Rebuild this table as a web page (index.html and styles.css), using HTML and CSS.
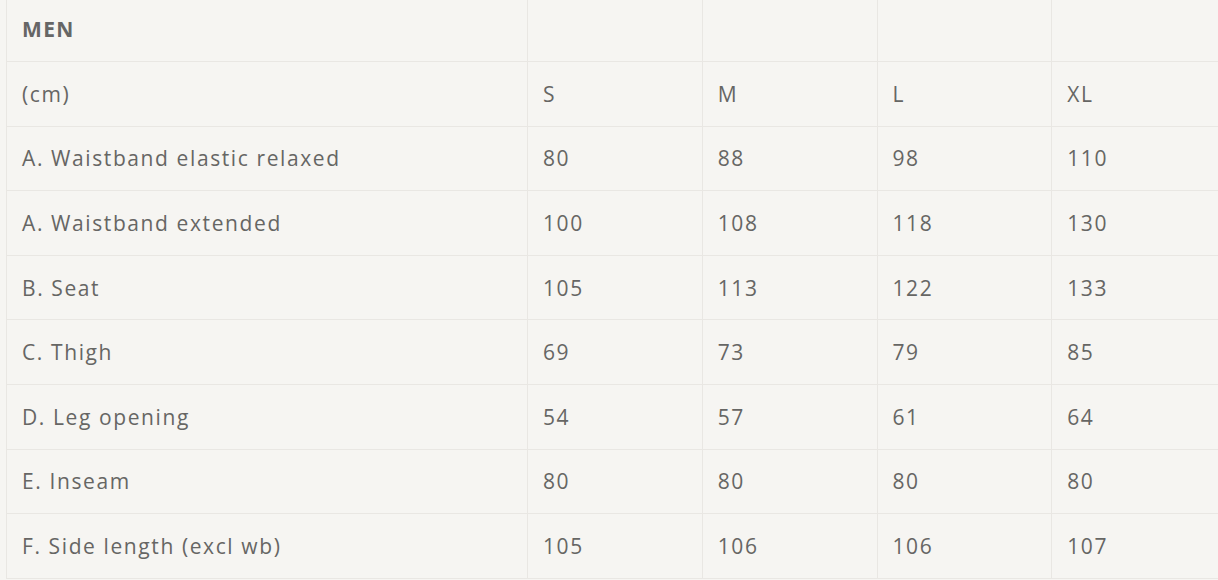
FILE: index.html
```html
<!DOCTYPE html>
<html>
<head>
<meta charset="utf-8">
<link rel="stylesheet" href="styles.css">
</head>
<body>
<table class="size-table">
  <colgroup>
    <col class="c-label"><col class="c-size"><col class="c-size"><col class="c-size"><col class="c-size">
  </colgroup>
  <tr class="head"><th>MEN</th><td></td><td></td><td></td><td></td></tr>
  <tr><td>(cm)</td><td>S</td><td>M</td><td>L</td><td>XL</td></tr>
  <tr><td>A. Waistband elastic relaxed</td><td>80</td><td>88</td><td>98</td><td>110</td></tr>
  <tr><td>A. Waistband extended</td><td>100</td><td>108</td><td>118</td><td>130</td></tr>
  <tr><td>B. Seat</td><td>105</td><td>113</td><td>122</td><td>133</td></tr>
  <tr><td>C. Thigh</td><td>69</td><td>73</td><td>79</td><td>85</td></tr>
  <tr><td>D. Leg opening</td><td>54</td><td>57</td><td>61</td><td>64</td></tr>
  <tr><td>E. Inseam</td><td>80</td><td>80</td><td>80</td><td>80</td></tr>
  <tr><td>F. Side length (excl wb)</td><td>105</td><td>106</td><td>106</td><td>107</td></tr>
</table>
</body>
</html>
```
FILE: styles.css
```css
html, body {
  margin: 0;
  padding: 0;
  background: #f6f5f2;
  overflow: hidden;
}
.size-table {
  margin: -3px 0 0 6px;
  width: 1220px;
  border-collapse: collapse;
  table-layout: fixed;
  font-family: "Open Sans", "Noto Sans", sans-serif;
  font-size: 21px;
  letter-spacing: 1.6px;
  color: #666664;
  background: #f6f5f2;
}
.c-label { width: 521px; }
.c-size { width: 174.75px; }
.size-table tr { height: 64.6px; }
.size-table th,
.size-table td {
  padding: 0 0 0 15px;
  text-align: left;
  font-weight: 400;
  border: 1px solid #e9e7e3;
  vertical-align: middle;
  white-space: nowrap;
}
.size-table .head th {
  font-weight: 700;
  font-size: 21px;
  letter-spacing: 1.4px;
  color: #666;
  border-top: none;
}
.size-table .head td { border-top: none; }
```
